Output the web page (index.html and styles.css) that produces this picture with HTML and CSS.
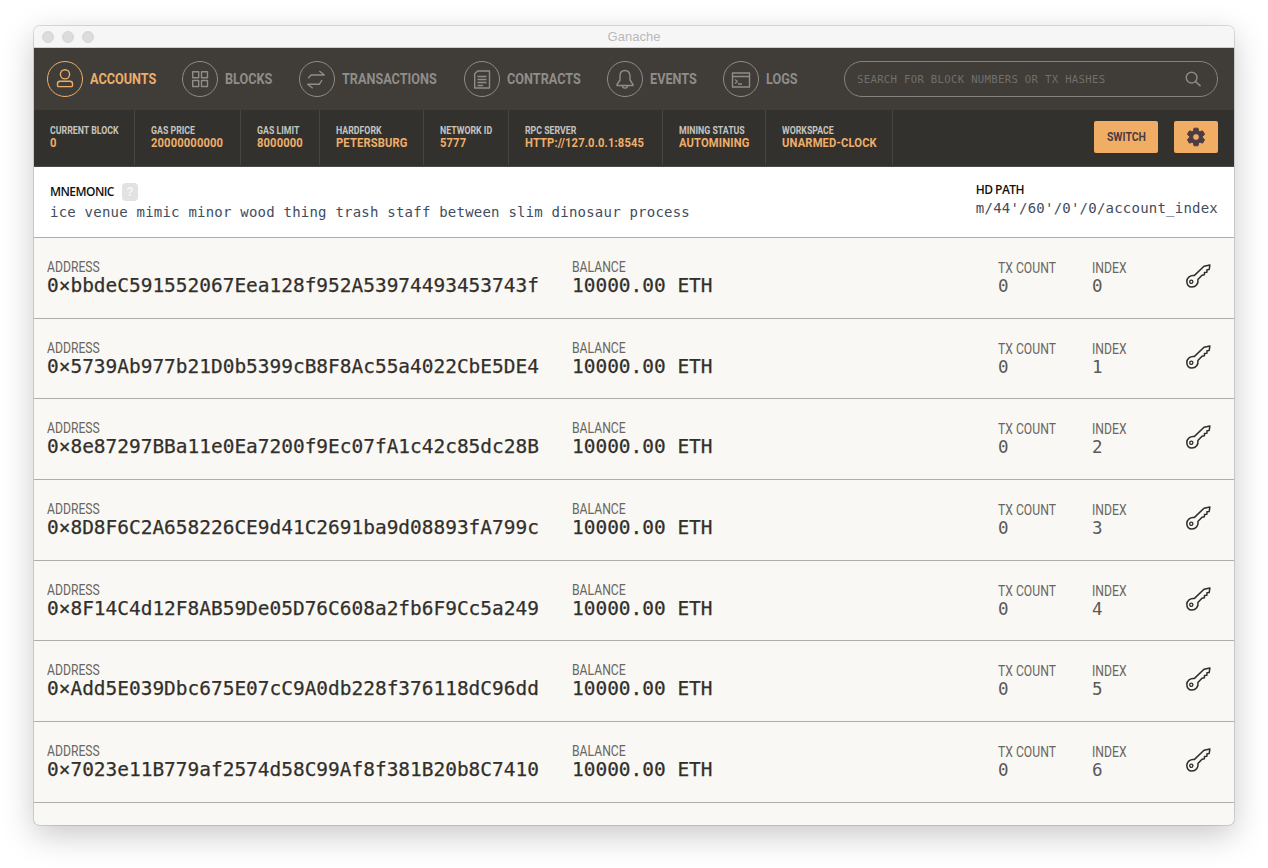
FILE: index.html
```html
<!DOCTYPE html>
<html lang="en">
<head>
<meta charset="utf-8">
<title>Ganache</title>
<link rel="stylesheet" href="styles.css">
</head>
<body>
<svg class="defs" width="0" height="0" aria-hidden="true">
  <symbol id="key" viewBox="0 0 25 24">
    <path fill="none" stroke="currentColor" stroke-width="1.5" stroke-linejoin="round" d="M8.2 11.6 18 2.2 23.9 .9 23.2 5.4 21 5.8 20.9 8.3 18.5 8.4 18.4 10.8 16 11.2 11.9 15.6C12.6 19.5 10 23 5.8 23 2.7 23 .8 20.5 .8 17.6.8 14 4.4 10.8 8.2 11.6Z"/>
    <circle cx="5.3" cy="17.8" r="1.6" fill="none" stroke="currentColor" stroke-width="1.3"/>
  </symbol>
</svg>
<div class="window">
  <div class="titlebar">
    <div class="lights"><span class="light"></span><span class="light"></span><span class="light"></span></div>
    <span class="title">Ganache</span>
  </div>
  <nav class="nav">
    <a class="nav-item active">
      <span class="nav-icon"><svg viewBox="0 0 36 36"><circle cx="18" cy="13.3" r="4.6"/><path d="M11.7 25.6h12.6a1.2 1.2 0 0 0 1.2-1.2v-1.6a2.6 2.6 0 0 0-2.6-2.6h-9.8a2.6 2.6 0 0 0-2.6 2.6v1.6a1.2 1.2 0 0 0 1.2 1.2Z"/></svg></span>
      <span class="nav-text">ACCOUNTS</span>
    </a>
    <a class="nav-item">
      <span class="nav-icon"><svg viewBox="0 0 36 36"><rect x="10.7" y="10.7" width="6" height="6"/><rect x="19.5" y="10.7" width="6" height="6"/><rect x="10.7" y="19.5" width="6" height="6"/><rect x="19.5" y="19.5" width="6" height="6"/></svg></span>
      <span class="nav-text">BLOCKS</span>
    </a>
    <a class="nav-item">
      <span class="nav-icon"><svg viewBox="0 0 36 36"><path d="M9.3 17.3 12 14H25.3L20.3 10"/><path d="M23 19 20.3 23.3H8.7L13.7 27.3"/></svg></span>
      <span class="nav-text">TRANSACTIONS</span>
    </a>
    <a class="nav-item">
      <span class="nav-icon"><svg viewBox="0 0 36 36"><path d="M13.5 10H25.5V27H10.7V13Z"/><path class="thick" d="M13.5 15.5H22.5M13.5 18.5H22.5M13.5 21.5H22.5M13.5 24.5H19"/></svg></span>
      <span class="nav-text">CONTRACTS</span>
    </a>
    <a class="nav-item">
      <span class="nav-icon"><svg viewBox="0 0 36 36"><path d="M18 9.5C14.5 9.5 13 12.3 13 15V19L10 23.5V24.5H26V23.5L23 19V15C23 12.3 21.5 9.5 18 9.5Z"/><path d="M15.5 24.5C15.5 28 20.5 28 20.5 24.5"/></svg></span>
      <span class="nav-text">EVENTS</span>
    </a>
    <a class="nav-item">
      <span class="nav-icon"><svg viewBox="0 0 36 36"><rect x="9.5" y="12" width="17" height="14"/><path d="M9.5 15.5H26.5M12 18.5 14.5 20.5 12 22.5M15 23H19"/></svg></span>
      <span class="nav-text">LOGS</span>
    </a>
    <div class="search">
      <span class="search-text">SEARCH FOR BLOCK NUMBERS OR TX HASHES</span>
      <svg class="search-icon" viewBox="0 0 18 18"><circle cx="7" cy="7" r="5.7"/><path d="M11.2 11.2 16.5 16"/></svg>
    </div>
  </nav>
  <div class="status">
    <div class="stats">
      <div class="stat"><div class="stat-label">CURRENT BLOCK</div><div class="stat-value">0</div></div>
      <div class="stat"><div class="stat-label">GAS PRICE</div><div class="stat-value">20000000000</div></div>
      <div class="stat"><div class="stat-label">GAS LIMIT</div><div class="stat-value">8000000</div></div>
      <div class="stat"><div class="stat-label">HARDFORK</div><div class="stat-value">PETERSBURG</div></div>
      <div class="stat"><div class="stat-label">NETWORK ID</div><div class="stat-value">5777</div></div>
      <div class="stat"><div class="stat-label">RPC SERVER</div><div class="stat-value">HTTP://127.0.0.1:8545</div></div>
      <div class="stat"><div class="stat-label">MINING STATUS</div><div class="stat-value">AUTOMINING</div></div>
      <div class="stat"><div class="stat-label">WORKSPACE</div><div class="stat-value">UNARMED-CLOCK</div></div>
    </div>
    <div class="actions">
      <button class="btn btn-switch"><span class="btn-text">SWITCH</span></button>
      <button class="btn btn-gear"><svg viewBox="0 0 24 24"><path fill-rule="evenodd" d="M19.14 12.94c.04-.3.06-.61.06-.94 0-.32-.02-.64-.07-.94l2.03-1.58c.18-.14.23-.41.12-.61l-1.92-3.32c-.12-.22-.37-.29-.59-.22l-2.39.96c-.5-.38-1.03-.7-1.62-.94l-.36-2.54c-.04-.24-.24-.41-.48-.41h-3.84c-.24 0-.43.17-.47.41l-.36 2.54c-.59.24-1.13.57-1.62.94l-2.39-.96c-.22-.08-.47 0-.59.22L2.74 8.87c-.12.21-.08.47.12.61l2.03 1.58c-.05.3-.09.63-.09.94s.02.64.07.94l-2.03 1.58c-.18.14-.23.41-.12.61l1.92 3.32c.12.22.37.29.59.22l2.39-.96c.5.38 1.03.7 1.62.94l.36 2.54c.05.24.24.41.48.41h3.84c.24 0 .44-.17.47-.41l.36-2.54c.59-.24 1.13-.56 1.62-.94l2.39.96c.22.08.47 0 .59-.22l1.92-3.32c.12-.22.07-.47-.12-.61l-2.01-1.58zM12 15.6c-1.98 0-3.6-1.62-3.6-3.6s1.62-3.6 3.6-3.6 3.6 1.62 3.6 3.6-1.62 3.6-3.6 3.6z"/></svg></button>
    </div>
  </div>
  <section class="mnemonic">
    <div class="mn-left">
      <div class="mn-head"><span class="mn-label">MNEMONIC</span><span class="help">?</span></div>
      <div class="mn-value">ice venue mimic minor wood thing trash staff between slim dinosaur process</div>
    </div>
    <div class="mn-right">
      <div class="mn-label">HD PATH</div>
      <div class="mn-value">m/44'/60'/0'/0/account_index</div>
    </div>
  </section>
  <main class="accounts">
    <div class="row">
      <div class="cell-address"><div class="label">ADDRESS</div><div class="value">0×bbdeC591552067Eea128f952A53974493453743f</div></div>
      <div class="cell-balance"><div class="label">BALANCE</div><div class="value">10000.00 ETH</div></div>
      <div class="cell-tx"><div class="label">TX COUNT</div><div class="num">0</div></div>
      <div class="cell-index"><div class="label">INDEX</div><div class="num">0</div></div>
      <svg class="key"><use href="#key"/></svg>
    </div>
    <div class="row">
      <div class="cell-address"><div class="label">ADDRESS</div><div class="value">0×5739Ab977b21D0b5399cB8F8Ac55a4022CbE5DE4</div></div>
      <div class="cell-balance"><div class="label">BALANCE</div><div class="value">10000.00 ETH</div></div>
      <div class="cell-tx"><div class="label">TX COUNT</div><div class="num">0</div></div>
      <div class="cell-index"><div class="label">INDEX</div><div class="num">1</div></div>
      <svg class="key"><use href="#key"/></svg>
    </div>
    <div class="row">
      <div class="cell-address"><div class="label">ADDRESS</div><div class="value">0×8e87297BBa11e0Ea7200f9Ec07fA1c42c85dc28B</div></div>
      <div class="cell-balance"><div class="label">BALANCE</div><div class="value">10000.00 ETH</div></div>
      <div class="cell-tx"><div class="label">TX COUNT</div><div class="num">0</div></div>
      <div class="cell-index"><div class="label">INDEX</div><div class="num">2</div></div>
      <svg class="key"><use href="#key"/></svg>
    </div>
    <div class="row">
      <div class="cell-address"><div class="label">ADDRESS</div><div class="value">0×8D8F6C2A658226CE9d41C2691ba9d08893fA799c</div></div>
      <div class="cell-balance"><div class="label">BALANCE</div><div class="value">10000.00 ETH</div></div>
      <div class="cell-tx"><div class="label">TX COUNT</div><div class="num">0</div></div>
      <div class="cell-index"><div class="label">INDEX</div><div class="num">3</div></div>
      <svg class="key"><use href="#key"/></svg>
    </div>
    <div class="row">
      <div class="cell-address"><div class="label">ADDRESS</div><div class="value">0×8F14C4d12F8AB59De05D76C608a2fb6F9Cc5a249</div></div>
      <div class="cell-balance"><div class="label">BALANCE</div><div class="value">10000.00 ETH</div></div>
      <div class="cell-tx"><div class="label">TX COUNT</div><div class="num">0</div></div>
      <div class="cell-index"><div class="label">INDEX</div><div class="num">4</div></div>
      <svg class="key"><use href="#key"/></svg>
    </div>
    <div class="row">
      <div class="cell-address"><div class="label">ADDRESS</div><div class="value">0×Add5E039Dbc675E07cC9A0db228f376118dC96dd</div></div>
      <div class="cell-balance"><div class="label">BALANCE</div><div class="value">10000.00 ETH</div></div>
      <div class="cell-tx"><div class="label">TX COUNT</div><div class="num">0</div></div>
      <div class="cell-index"><div class="label">INDEX</div><div class="num">5</div></div>
      <svg class="key"><use href="#key"/></svg>
    </div>
    <div class="row">
      <div class="cell-address"><div class="label">ADDRESS</div><div class="value">0×7023e11B779af2574d58C99Af8f381B20b8C7410</div></div>
      <div class="cell-balance"><div class="label">BALANCE</div><div class="value">10000.00 ETH</div></div>
      <div class="cell-tx"><div class="label">TX COUNT</div><div class="num">0</div></div>
      <div class="cell-index"><div class="label">INDEX</div><div class="num">6</div></div>
      <svg class="key"><use href="#key"/></svg>
    </div>
  </main>
</div>
</body>
</html>
```
FILE: styles.css
```css
* { box-sizing: border-box; }
html, body { margin: 0; height: 100%; background: #fff; overflow: hidden; }
body { padding: 26px 34px 43px; font-family: "Roboto", sans-serif; }
.defs { position: absolute; }

.window {
  height: 799px;
  display: flex;
  flex-direction: column;
  border-radius: 6px;
  overflow: hidden;
  background: #f9f8f4;
  box-shadow: 0 0 0 1px rgba(0,0,0,.12), 0 10px 32px rgba(0,0,0,.22);
}

.titlebar {
  height: 22px;
  flex: none;
  display: flex;
  align-items: center;
  justify-content: center;
  position: relative;
  background: #f6f6f6;
  border-bottom: 1px solid #cfcfcf;
}
.lights { position: absolute; left: 8px; top: 5px; display: flex; gap: 8px; }
.light { width: 12px; height: 12px; border-radius: 50%; background: #dcdcdc; border: 1px solid #d4d4d4; }
.title { font: 13px "Liberation Sans", sans-serif; color: #b9b9b9; }

.nav {
  height: 62px;
  flex: none;
  display: grid;
  grid-template-columns: 135px 117px 165px 143px 116px 121px 374px;
  align-items: center;
  padding-left: 13px;
  background: #403c37;
}
.nav-item {
  display: flex;
  align-items: center;
  gap: 7px;
  color: #8f8d8a;
  font-size: 14px;
  font-weight: 700;
}
.nav-item.active { color: #edae6b; }
.nav-text { display: inline-block; transform: scaleX(.905); transform-origin: left center; white-space: nowrap; }
.nav-icon {
  width: 36px;
  height: 36px;
  border: 1.5px solid currentColor;
  border-radius: 50%;
  flex: none;
}
.nav-icon svg { display: block; width: 36px; height: 36px; margin: -1.5px; fill: none; stroke: currentColor; stroke-width: 1.4; stroke-linejoin: round; }
.nav-icon svg .thick { stroke-width: 1.7; }

.search {
  height: 36px;
  display: flex;
  align-items: center;
  justify-content: space-between;
  padding: 0 15px 0 12px;
  border: 1px solid #85837f;
  border-radius: 18px;
}
.search-text { font: 10.7px "DejaVu Sans Mono", monospace; letter-spacing: .28px; color: #716f6b; white-space: nowrap; }
.search-icon { width: 17px; height: 17px; fill: none; stroke: #8b8986; stroke-width: 1.6; }

.status {
  height: 57px;
  flex: none;
  display: flex;
  justify-content: space-between;
  align-items: stretch;
  background: #33312d;
  border-bottom: 1px solid #4a4a48;
}
.stats {
  display: grid;
  grid-template-columns: 101px 106px 79px 104px 85px 154px 103px 127px;
}
.stat {
  padding: 15px 0 0 16px;
  border-right: 1px solid #47453f;
  height: 55px;
  white-space: nowrap;
}
.stat-label { font-size: 10.4px; font-weight: 700; line-height: 11px; color: #c5c3bf; transform: scaleX(.845); transform-origin: left center; }
.stat-value { font-size: 13.5px; font-weight: 700; line-height: 12px; color: #edae6b; transform: scaleX(.83); transform-origin: left center; letter-spacing: .16px; }
.actions { display: flex; align-items: center; gap: 16px; padding: 0 16px 2px 0; }
.btn { height: 32px; border: 0; border-radius: 2px; background: #f2ad64; color: #4a3c42; display: flex; align-items: center; justify-content: center; padding: 0; }
.btn-switch { width: 64px; font: 700 12px "Roboto", sans-serif; }
.btn-text { display: inline-block; transform: scaleX(.87); }
.btn-gear { width: 44px; }
.btn-gear svg { width: 22px; height: 22px; fill: #4a3c42; stroke: #4a3c42; stroke-width: 1; }

.mnemonic {
  height: 71px;
  flex: none;
  display: flex;
  justify-content: space-between;
  padding: 16px 16px 0 16px;
  background: #fff;
  border-bottom: 1px solid #adadad;
}
.mn-head { display: flex; align-items: center; gap: 8px; height: 18px; }
.mn-label { font: 600 12px/18px "Open Sans", sans-serif; color: #111; letter-spacing: -.55px; }
.help { width: 16px; height: 18px; border-radius: 4px; background: #e2e2e2; color: #f6f6f6; font: 700 12px/18px "Liberation Sans", sans-serif; text-align: center; }
.mn-value { font: 14px/19px "DejaVu Sans Mono", monospace; color: #414c5e; letter-spacing: .22px; margin-top: 2px; }
.mn-right { margin-top: -2px; }
.mn-right .mn-value { margin-top: 0; }

.accounts { flex: 1; }
.row {
  height: 80.67px;
  display: flex;
  padding: 22px 0 0 13px;
  border-bottom: 1px solid #adadad;
}
.label { font-size: 14.5px; line-height: 16px; color: #69665f; white-space: nowrap; transform: scaleX(.84); transform-origin: left center; }
.value { font: 19.47px/20px "DejaVu Sans Mono", monospace; color: #322f2b; white-space: nowrap; -webkit-text-stroke: .25px #322f2b; }
.num { font: 17.5px/20px "DejaVu Sans Mono", monospace; color: #5b5954; margin-top: -1px; }
.cell-address { width: 525px; }
.cell-balance { width: 426px; }
.cell-tx { width: 94px; padding-top: 1px; }
.cell-index { width: 94px; padding-top: 1px; }
.key { width: 25px; height: 24px; margin-top: 4px; color: #2f2c29; }
```
